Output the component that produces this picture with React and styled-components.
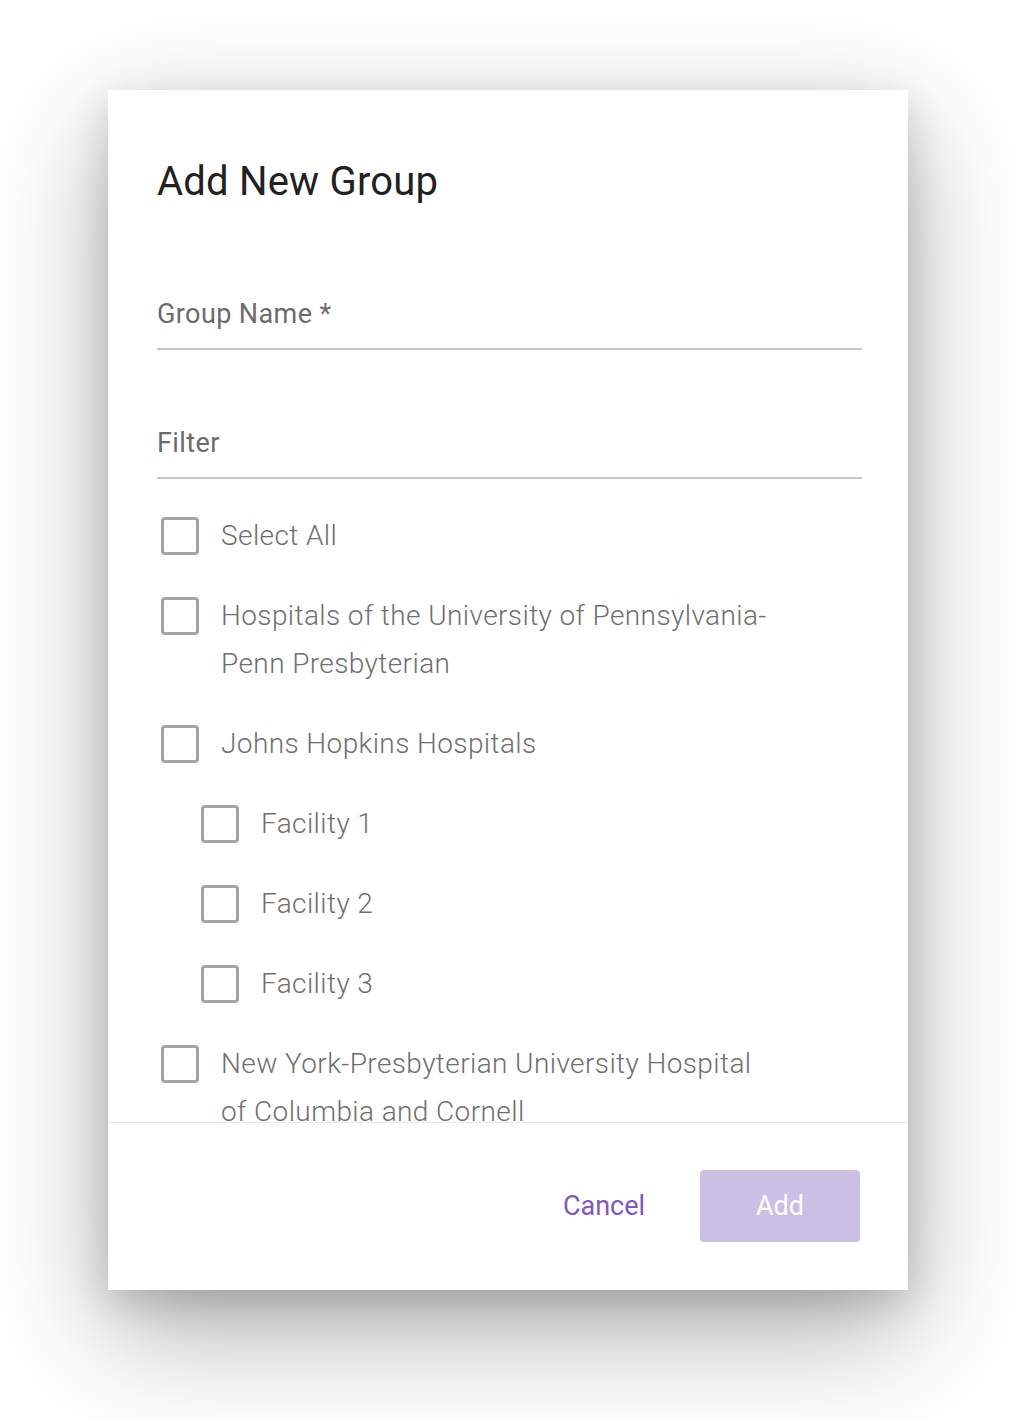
import React from 'react'
import styled, { createGlobalStyle } from "styled-components";

const GlobalStyle = createGlobalStyle`
    html, body {
        margin: 0;
        padding: 0;
        background: #ffffff;
    }
    * {
        box-sizing: border-box;
    }
`;

const items = [
    { id: "all", lines: ["Select All"] },
    { id: "penn", lines: ["Hospitals of the University of Pennsylvania-", "Penn Presbyterian"] },
    { id: "jh", lines: ["Johns Hopkins Hospitals"] },
    { id: "f1", lines: ["Facility 1"], nested: true },
    { id: "f2", lines: ["Facility 2"], nested: true },
    { id: "f3", lines: ["Facility 3"], nested: true },
    { id: "nyp", lines: ["New York-Presbyterian University Hospital", "of Columbia and Cornell"] },
];

export default function App() {
    return <>
        <GlobalStyle />
        <Page>
            <Dialog>
                <Header>
                    <Title>Add New Group</Title>
                    <Field $gap={92}>
                        <FieldInput placeholder="Group Name *" />
                    </Field>
                    <Field $gap={77}>
                        <FieldInput placeholder="Filter" />
                    </Field>
                </Header>

                <List>
                    {items.map((item) => (
                        <Row key={item.id} $nested={item.nested}>
                            <Check type="checkbox" />
                            <RowLabel>
                                {item.lines.map((line, i) => (
                                    <React.Fragment key={i}>
                                        {i > 0 && <br />}
                                        {line}
                                    </React.Fragment>
                                ))}
                            </RowLabel>
                        </Row>
                    ))}
                </List>

                <Footer>
                    <TextButton>Cancel</TextButton>
                    <PrimaryButton disabled>Add</PrimaryButton>
                </Footer>
            </Dialog>
        </Page>
    </>
}

const Page = styled.div`
    min-height: 1420px;
    padding: 90px 108px 130px;
    font-family: Roboto, "Liberation Sans", sans-serif;
`;

const Dialog = styled.div`
    width: 800px;
    height: 1200px;
    background: #ffffff;
    display: flex;
    flex-direction: column;
    box-shadow: 0 40px 110px rgba(0, 0, 0, 0.33), 0 14px 36px rgba(0, 0, 0, 0.14);
`;

const Header = styled.div`
    padding: 68px 46px 0 49px;
`;

const Title = styled.h2`
    margin: 0;
    font-size: 40px;
    line-height: 48px;
    font-weight: 400;
    letter-spacing: 0.2px;
    color: #212121;
`;

const Field = styled.div`
    margin-top: ${(p) => p.$gap}px;
    padding-bottom: 18px;
    border-bottom: 2px solid #c6c6c6;
`;

const FieldInput = styled.input`
    display: block;
    width: 100%;
    border: none;
    outline: none;
    padding: 0;
    background: transparent;
    font-family: inherit;
    font-size: 27px;
    letter-spacing: 0.4px;
    line-height: 32px;
    height: 32px;
    color: #212121;

    &::placeholder {
        color: #6b6b6b;
        opacity: 1;
    }
`;

const List = styled.div`
    flex: 1;
    overflow: hidden;
    padding: 17px 46px 0 49px;
`;

const Row = styled.div`
    display: flex;
    align-items: flex-start;
    gap: 22px;
    padding: 16px 0 16px ${(p) => (p.$nested ? 44 : 4)}px;
`;

const Check = styled.input`
    appearance: none;
    flex: none;
    width: 38px;
    height: 38px;
    margin: 5px 0 0;
    border: 3px solid #a4a4a4;
    border-radius: 4px;
    background: #ffffff;
`;

const RowLabel = styled.div`
    font-size: 28px;
    letter-spacing: 0.4px;
    line-height: 48px;
    font-weight: 300;
    color: #6f6f6f;
`;

const Footer = styled.div`
    flex: none;
    height: 168px;
    border-top: 1px solid #e6eaee;
    display: flex;
    justify-content: flex-end;
    align-items: flex-start;
    gap: 16px;
    padding: 47px 48px 0 0;
`;

const TextButton = styled.button`
    width: 160px;
    height: 72px;
    border: none;
    background: transparent;
    font-family: inherit;
    font-size: 27px;
    color: #7e57c2;
    border-radius: 4px;
`;

const PrimaryButton = styled.button`
    width: 160px;
    height: 72px;
    border: none;
    border-radius: 4px;
    background: #cbc0e3;
    font-family: inherit;
    font-size: 27px;
    color: #ffffff;
`;
